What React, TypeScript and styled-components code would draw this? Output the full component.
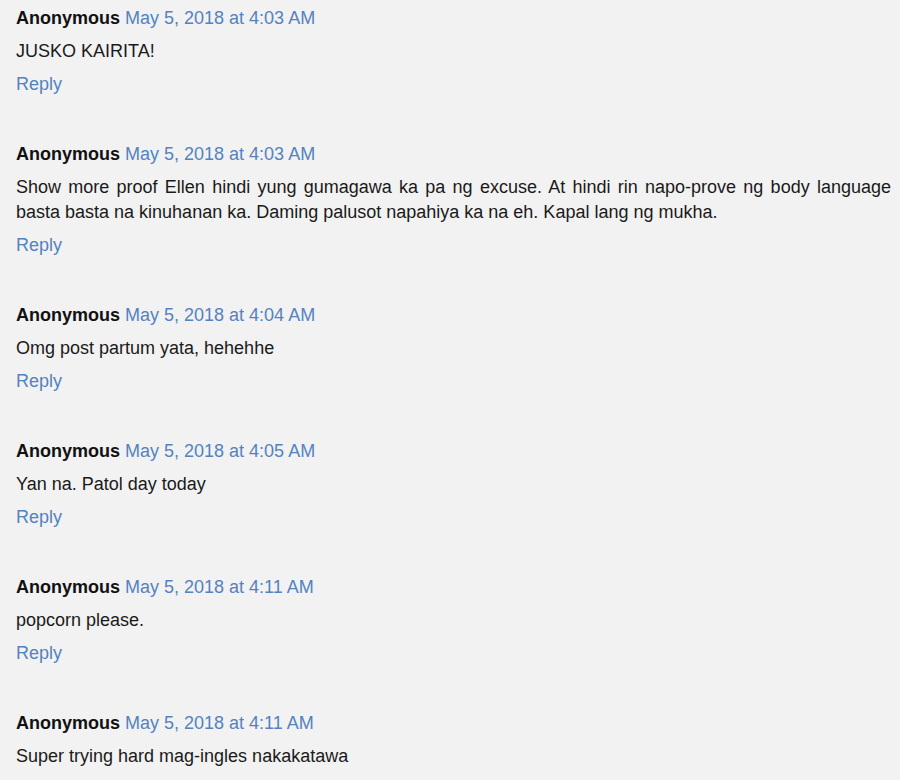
import React from 'react';
import styled, { createGlobalStyle } from 'styled-components';

const GlobalStyle = createGlobalStyle`
  html, body {
    margin: 0;
    padding: 0;
    background: #f2f2f2;
  }
  body {
    font-family: "Liberation Sans", Arial, sans-serif;
  }
`;

const CommentList = styled.div`
  display: flex;
  flex-direction: column;
  gap: 45px;
  padding: 6px 9px 0 16px;
  font-size: 18px;
  line-height: 25px;
  color: #1a1a1a;
`;

const Comment = styled.div`
  display: flex;
  flex-direction: column;
  gap: 8px;
`;

const Header = styled.div`
  display: flex;
  gap: 5px;
  white-space: nowrap;
`;

const Author = styled.span`
  font-weight: bold;
  color: #111;
`;

const Stamp = styled.a`
  color: #5383c0;
  text-decoration: none;
`;

const Body = styled.div`
  text-align: justify;
`;

const ReplyLink = styled.a`
  color: #5383c0;
  text-decoration: none;
`;

const comments = [
  { time: 'May 5, 2018 at 4:03 AM', text: 'JUSKO KAIRITA!' },
  {
    time: 'May 5, 2018 at 4:03 AM',
    text: 'Show more proof Ellen hindi yung gumagawa ka pa ng excuse. At hindi rin napo-prove ng body language basta basta na kinuhanan ka. Daming palusot napahiya ka na eh. Kapal lang ng mukha.',
  },
  { time: 'May 5, 2018 at 4:04 AM', text: 'Omg post partum yata, hehehhe' },
  { time: 'May 5, 2018 at 4:05 AM', text: 'Yan na. Patol day today' },
  { time: 'May 5, 2018 at 4:11 AM', text: 'popcorn please.' },
  { time: 'May 5, 2018 at 4:11 AM', text: 'Super trying hard mag-ingles nakakatawa' },
];

export default function App() {
  return (
    <>
      <GlobalStyle />
      <CommentList>
        {comments.map((c, i) => (
          <Comment key={i}>
            <Header>
              <Author>Anonymous</Author>
              <Stamp href="#">{c.time}</Stamp>
            </Header>
            <Body>{c.text}</Body>
            <ReplyLink href="#">Reply</ReplyLink>
          </Comment>
        ))}
      </CommentList>
    </>
  );
}
